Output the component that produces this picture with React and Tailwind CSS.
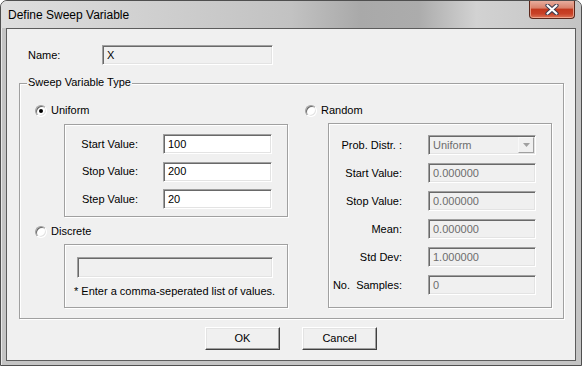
import React from "react";

function Field({ value, disabled, dim, width, height }) {
  return (
    <div
      className={`${width} ${height || "h-[20px]"} flex items-center pl-[4px] border border-t-[#a0a0a0] border-l-[#a0a0a0] border-b-white border-r-white shadow-[inset_1px_1px_0_#696969,inset_-1px_-1px_0_#e3e3e3] ${disabled ? "bg-[#f0f0f0]" : "bg-white"} ${dim ? "text-[#6d6d6d]" : "text-black"}`}
    >
      {value}
    </div>
  );
}

function Radio({ checked, label }) {
  return (
    <div className="flex items-center h-[13px] gap-[4px]">
      <div className="w-[12px] h-[12px] rounded-full border border-[#a0a0a0] border-r-white border-b-white bg-white shadow-[inset_1px_1px_0_#696969,inset_-1px_-1px_0_#e3e3e3] flex items-center justify-center">
        {checked && <div className="w-[4px] h-[4px] rounded-full bg-black" />}
      </div>
      <span>{label}</span>
    </div>
  );
}

function Button({ children }) {
  return (
    <div className="w-[75px] h-[23px] flex items-center justify-center border border-t-white border-l-white border-b-[#404040] border-r-[#404040] shadow-[inset_-1px_-1px_0_#a0a0a0,inset_1px_1px_0_#e3e3e3] bg-[#f0f0f0]">
      {children}
    </div>
  );
}

const etched = "border border-[#a0a0a0] shadow-[1px_1px_0_#fff,inset_1px_1px_0_#fff]";

export default function App() {
  const randomRows = [
    ["Start Value:", "0.000000"],
    ["Stop Value:", "0.000000"],
    ["Mean:", "0.000000"],
    ["Std Dev:", "1.000000"],
    ["No.  Samples:", "0"],
  ];

  return (
    <div className="w-[582px] h-[366px] bg-white font-['Liberation_Sans',Arial,sans-serif] text-[11px] text-black leading-[13px]">
      <div className="w-full h-full flex flex-col rounded-t-[7px] border border-[#4f4f4f] bg-[#c4c4c4] shadow-[inset_1px_1px_0_#e8e8e8]">
        {/* title bar */}
        <div className="h-[27px] flex justify-between rounded-t-[6px] bg-[linear-gradient(90deg,#dedede_0%,#d0d0d0_25%,#c2c2c2_50%,#a9a9a9_62%,#acacac_72%,#d2d2d2_82%,#c4c4c4_100%)]">
          <div className="pl-[7px] pt-[7px] text-[12px] leading-[14px]">Define Sweep Variable</div>
          <div className="mr-[6px] w-[46px] h-[18px] rounded-b-[4px] border border-t-0 border-[#5a271b] bg-[linear-gradient(180deg,#e7ad9d_0%,#d9826c_40%,#c2391e_50%,#c84127_75%,#dc7558_100%)] shadow-[inset_0_-1px_0_#eea28a,inset_1px_0_0_#e79a85,inset_-1px_0_0_#e79a85] flex items-center justify-center">
            <svg width="14" height="11" viewBox="0 0 14 11">
              <path d="M2.5 1.5 L11.5 9.5 M11.5 1.5 L2.5 9.5" stroke="#3b3b4e" strokeWidth="4.2" strokeLinecap="round" />
              <path d="M2.5 1.5 L11.5 9.5 M11.5 1.5 L2.5 9.5" stroke="#ffffff" strokeWidth="2.2" strokeLinecap="round" />
            </svg>
          </div>
        </div>

        {/* client area */}
        <div className="flex-1 mx-[5px] mb-[4px] border border-[#5c5c5c] bg-[#f0f0f0] flex flex-col">
          <div className="pt-[16px] pl-[21px] flex items-center">
            <div className="w-[74px]">Name:</div>
            <Field value="X" disabled width="w-[171px]" />
          </div>

          <div className={`mt-[18px] ml-[12px] w-[545px] h-[236px] flex flex-col ${etched}`}>
            <div className="-mt-[8px] ml-[7px] px-[1px] w-fit bg-[#f0f0f0]">Sweep Variable Type</div>

            <div className="flex">
              {/* left column */}
              <div className="w-[275px] pl-[15px] flex flex-col">
                <div className="mt-[15px]">
                  <Radio checked label="Uniform" />
                </div>
                <div className={`mt-[7px] ml-[29px] w-[224px] h-[93px] pt-[9px] ${etched}`}>
                  <div className="grid grid-cols-[73px_109px] gap-x-[25px] gap-y-[7.5px] items-center">
                    <div className="text-right">Start Value:</div>
                    <Field value="100" width="w-[109px]" />
                    <div className="text-right">Stop Value:</div>
                    <Field value="200" width="w-[109px]" />
                    <div className="text-right">Step Value:</div>
                    <Field value="20" width="w-[109px]" />
                  </div>
                </div>
                <div className="mt-[8px]">
                  <Radio label="Discrete" />
                </div>
                <div className={`mt-[6px] ml-[29px] w-[224px] h-[64px] pt-[12px] pl-[12px] flex flex-col ${etched}`}>
                  <Field value="" disabled width="w-[196px]" height="h-[21px]" />
                  <div className="mt-[7px] -ml-[3px] whitespace-pre">* Enter a comma-seperated list of values.</div>
                </div>
              </div>

              {/* right column */}
              <div className="pl-[10px] flex flex-col">
                <div className="mt-[15px]">
                  <Radio label="Random" />
                </div>
                <div className={`mt-[6px] ml-[23px] w-[224px] h-[185px] pt-[11px] ${etched}`}>
                  <div className="grid grid-cols-[73px_108px] gap-x-[26px] gap-y-[8px] items-center">
                    <div className="text-right">Prob. Distr. :</div>
                    <div className="w-[108px] h-[20px] p-[1px] flex border border-t-[#a0a0a0] border-l-[#a0a0a0] border-b-white border-r-white shadow-[inset_1px_1px_0_#696969,inset_-1px_-1px_0_#e3e3e3] bg-[#f0f0f0]">
                      <div className="flex-1 pl-[3px] flex items-center text-[#6d6d6d]">Uniform</div>
                      <div className="w-[16px] h-full flex items-center justify-center border border-t-[#f8f8f8] border-l-[#f8f8f8] border-b-[#a0a0a0] border-r-[#a0a0a0] bg-[#f0f0f0]">
                        <svg width="7" height="4" viewBox="0 0 7 4">
                          <polygon points="0,0 7,0 3.5,4" fill="#a0a0a0" />
                        </svg>
                      </div>
                    </div>
                    {randomRows.map(([label, value]) => (
                      <React.Fragment key={label}>
                        <div className="text-right whitespace-pre">{label}</div>
                        <Field value={value} disabled dim width="w-[108px]" />
                      </React.Fragment>
                    ))}
                  </div>
                </div>
              </div>
            </div>
          </div>

          <div className="mt-[8px] flex justify-center gap-[22px]">
            <Button>OK</Button>
            <Button>Cancel</Button>
          </div>
        </div>
      </div>
    </div>
  );
}
